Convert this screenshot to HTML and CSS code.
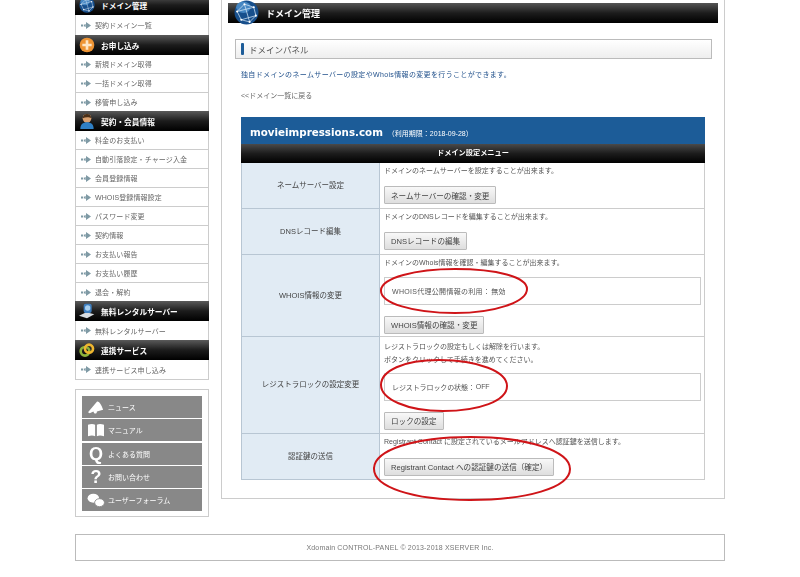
FILE: index.html
```html
<!DOCTYPE html>
<html lang="ja">
<head>
<meta charset="utf-8">
<title>Xdomain ドメイン管理</title>
<link rel="stylesheet" href="styles.css">
</head>
<body>
<svg class="defs" width="0" height="0">
  <symbol id="arrow" viewBox="0 0 10 7"><path d="M0 2.500h2v2H0zM2.800 2.500h1.400v2H2.800zM5 0l5 3.500-5 3.500v-2H4.500v-3H5z" fill="#7f9aa5"/></symbol>
  <symbol id="globe" viewBox="0 0 24 24"><circle cx="12" cy="12" r="11.500" fill="#174f8c"/><ellipse cx="9" cy="7" rx="7" ry="5.500" fill="#5ea4df" opacity=".65"/><path d="M3 11l7-7 9 3 2 8-6 6-8-2zM10 4l5 17M3 11l16-4M7 19l14-4" fill="none" stroke="#d6e8f7" stroke-width=".7"/><g fill="#fff"><circle cx="10" cy="4" r="1"/><circle cx="19" cy="7" r="1"/><circle cx="3" cy="11" r="1"/><circle cx="21" cy="15" r="1"/><circle cx="15" cy="21" r="1"/><circle cx="7" cy="19" r="1"/></g></symbol>
</svg>
<div class="page">
  <div class="columns">
    <aside class="sidebar">
      <nav class="menu">
        <h3 class="menu-head"><svg class="head-icon"><use href="#globe"/></svg>ドメイン管理</h3>
        <a class="menu-row menu-row-tall"><svg class="bullet"><use href="#arrow"/></svg>契約ドメイン一覧</a>
        <h3 class="menu-head"><svg class="head-icon" viewBox="0 0 24 24"><circle cx="12" cy="12" r="11" fill="#ee9434"/><path d="M10 5h4v5h5v4h-5v5h-4v-5H5v-4h5z" fill="#fde6c8"/></svg>お申し込み</h3>
        <a class="menu-row"><svg class="bullet"><use href="#arrow"/></svg>新規ドメイン取得</a>
        <a class="menu-row"><svg class="bullet"><use href="#arrow"/></svg>一括ドメイン取得</a>
        <a class="menu-row menu-row-short"><svg class="bullet"><use href="#arrow"/></svg>移管申し込み</a>
        <h3 class="menu-head"><svg class="head-icon" viewBox="0 0 24 24"><circle cx="12" cy="8" r="6.500" fill="#d9a06f"/><path d="M5.500 8a6.500 6.500 0 0 1 13 0c-3-2-9-2-13 0z" fill="#4a2f18"/><path d="M2 24c0-7 4-10 10-10s10 3 10 10z" fill="#2f7fc4"/></svg>契約・会員情報</h3>
        <a class="menu-row"><svg class="bullet"><use href="#arrow"/></svg>料金のお支払い</a>
        <a class="menu-row"><svg class="bullet"><use href="#arrow"/></svg>自動引落設定・チャージ入金</a>
        <a class="menu-row"><svg class="bullet"><use href="#arrow"/></svg>会員登録情報</a>
        <a class="menu-row"><svg class="bullet"><use href="#arrow"/></svg>WHOIS登録情報設定</a>
        <a class="menu-row"><svg class="bullet"><use href="#arrow"/></svg>パスワード変更</a>
        <a class="menu-row"><svg class="bullet"><use href="#arrow"/></svg>契約情報</a>
        <a class="menu-row"><svg class="bullet"><use href="#arrow"/></svg>お支払い報告</a>
        <a class="menu-row"><svg class="bullet"><use href="#arrow"/></svg>お支払い履歴</a>
        <a class="menu-row menu-row-short"><svg class="bullet"><use href="#arrow"/></svg>退会・解約</a>
        <h3 class="menu-head"><svg class="head-icon" viewBox="0 0 24 24"><path d="M0 19l11-5 12 3-11 6z" fill="#d8dde2"/><rect x="7" y="1" width="12" height="14" rx="3" fill="#3f7fc0"/><circle cx="13" cy="7.500" r="4" fill="#a9d0ef"/></svg>無料レンタルサーバー</h3>
        <a class="menu-row"><svg class="bullet"><use href="#arrow"/></svg>無料レンタルサーバー</a>
        <h3 class="menu-head"><svg class="head-icon" viewBox="0 0 24 24"><circle cx="9" cy="14" r="6.500" fill="none" stroke="#8db33a" stroke-width="4"/><circle cx="15" cy="10" r="6" fill="none" stroke="#efb62f" stroke-width="4"/></svg>連携サービス</h3>
        <a class="menu-row"><svg class="bullet"><use href="#arrow"/></svg>連携サービス申し込み</a>
      </nav>
      <div class="links">
        <a class="link"><svg class="link-icon" viewBox="0 0 20 18"><path d="M1 15L11 3c2-1 5 3 7 9l-7 2c0 2-1 3-3 2l-1-2-4 2z" fill="#fff"/></svg>ニュース</a>
        <a class="link"><svg class="link-icon" viewBox="0 0 20 18"><path d="M1 3c3-1 6-1 8 0v13c-2-1-5-1-8 0zM11 3c2-1 5-1 8 0v13c-3-1-6-1-8 0z" fill="#fff"/></svg>マニュアル</a>
        <a class="link"><span class="link-glyph">Q</span>よくある質問</a>
        <a class="link"><span class="link-glyph">?</span>お問い合わせ</a>
        <a class="link"><svg class="link-icon" viewBox="0 0 20 18"><ellipse cx="7" cy="7" rx="6.500" ry="5" fill="#fff"/><ellipse cx="14" cy="12" rx="5.500" ry="4.500" fill="#fff" stroke="#888"/></svg>ユーザーフォーラム</a>
      </div>
    </aside>
    <main class="card">
      <h1 class="title"><svg class="title-icon"><use href="#globe"/></svg>ドメイン管理</h1>
      <h2 class="panel-head"><span class="accent"></span>ドメインパネル</h2>
      <p class="lead">独自ドメインのネームサーバーの設定やWhois情報の変更を行うことができます。</p>
      <p class="back">&lt;&lt;ドメイン一覧に戻る</p>
      <div class="domain">
        <div class="domain-name">movieimpressions.com<span class="expiry">（利用期限：2018-09-28）</span></div>
        <div class="domain-menu">ドメイン設定メニュー</div>
        <table class="settings">
          <tr class="r1">
            <th>ネームサーバー設定</th>
            <td><p class="desc">ドメインのネームサーバーを設定することが出来ます。</p><button class="btn">ネームサーバーの確認・変更</button></td>
          </tr>
          <tr class="r2">
            <th>DNSレコード編集</th>
            <td><p class="desc">ドメインのDNSレコードを編集することが出来ます。</p><button class="btn">DNSレコードの編集</button></td>
          </tr>
          <tr class="r3">
            <th>WHOIS情報の変更</th>
            <td><p class="desc">ドメインのWhois情報を確認・編集することが出来ます。</p>
              <div class="status"><span>WHOIS代理公開情報の利用：</span><span>無効</span></div>
              <button class="btn btn-low">WHOIS情報の確認・変更</button></td>
          </tr>
          <tr class="r4">
            <th>レジストラロックの設定変更</th>
            <td><p class="desc desc-tight">レジストラロックの設定もしくは解除を行います。</p><p class="desc desc-tight">ボタンをクリックして手続きを進めてください。</p>
              <div class="status"><span>レジストラロックの状態：</span><span>OFF</span></div>
              <button class="btn btn-low">ロックの設定</button></td>
          </tr>
          <tr class="r5">
            <th>認証鍵の送信</th>
            <td><p class="desc">Registrant Contact に設定されているメールアドレスへ認証鍵を送信します。</p><button class="btn btn-wide">Registrant Contact への認証鍵の送信（確定）</button></td>
          </tr>
        </table>
      </div>
    </main>
  </div>
  <footer class="footer">Xdomain CONTROL-PANEL © 2013-2018 XSERVER Inc.</footer>
</div>
<svg class="marks" viewBox="0 0 800 577">
  <path d="M381 290c1-12 34-21 74-21 42 0 72 8 72 20 0 13-32 24-72 24-42 0-75-10-74-23z"/>
  <path d="M381 385c0-14 22-25 58-25 40 0 68 12 68 26 0 15-28 25-64 25-36 0-62-12-62-26z"/>
  <path d="M374 468c1-18 40-31 96-31 58 0 100 14 100 32 0 19-44 31-100 31-58 0-97-13-96-32z"/>
</svg>
</body>
</html>
```

FILE: styles.css
```css
* { box-sizing: border-box; }
html, body { margin: 0; padding: 0; background: #fff; }
body {
  font-family: "Liberation Sans", "Noto Sans CJK JP", sans-serif;
  font-size: 7px;
  color: #555;
  position: relative;
  height: 577px;
  overflow: hidden;
}
.defs { position: absolute; }
.page { width: 650px; margin: -5px 0 0 75px; filter: blur(.4px); }
.columns { display: flex; gap: 12px; align-items: flex-start; }

.sidebar { width: 134px; flex: none; display: flex; flex-direction: column; gap: 9px; }
.menu { display: flex; flex-direction: column; border: 1px solid #ccc; border-width: 0 1px 1px; }
.menu-head {
  margin: 0 -1px;
  height: 20px;
  display: flex;
  align-items: center;
  gap: 6px;
  padding-left: 4px;
  background: linear-gradient(#5a5a5a, #1c1c1c 50%, #000);
  color: #fff;
  font-size: 7.7px;
  font-weight: 700;
}
.head-icon { width: 16px; height: 16px; flex: none; }
.menu-row {
  height: 19px;
  display: flex;
  align-items: center;
  gap: 4px;
  padding-left: 5px;
  border-bottom: 1px solid #ccc;
  background: #fff;
  color: #666;
  letter-spacing: .1px;
}
.menu-row:last-child, .menu-row:has(+ .menu-head) { border-bottom: 0; }
.menu-row-tall { height: 20px; }
.menu-row-short { height: 18px; }
.bullet { width: 10px; height: 7px; flex: none; }

.links {
  border: 1px solid #ccc;
  padding: 6px 6px 5px;
  display: flex;
  flex-direction: column;
  gap: 1.3px;
}
.link {
  height: 22px;
  background: #888;
  color: #fff;
  display: flex;
  align-items: center;
  gap: 3px;
  padding-left: 5px;
  font-size: 7px;
}
.link-icon { width: 18px; height: 16px; flex: none; }
.link-glyph {
  width: 18px;
  text-align: center;
  flex: none;
  font: 700 18px/22px "Liberation Sans", sans-serif;
}

.card {
  width: 504px;
  height: 504px;
  flex: none;
  border: 1px solid #ccc;
  padding: 7px 6px 0;
}
.title {
  margin: 0;
  height: 20px;
  display: flex;
  align-items: center;
  padding-left: 38px;
  position: relative;
  background: linear-gradient(#555, #1c1c1c 50%, #000);
  color: #fff;
  font-size: 9px;
  font-weight: 700;
}
.title-icon { position: absolute; left: 6px; top: -3px; width: 25px; height: 25px; }
.panel-head {
  margin: 16px 6px 0 7px;
  height: 20px;
  display: flex;
  align-items: center;
  gap: 5px;
  padding-left: 5px;
  border: 1px solid #bbb;
  background: linear-gradient(#fff, #eee);
  color: #555;
  font-size: 8.5px;
  font-weight: 400;
}
.accent { width: 3px; height: 12px; background: #1e5d99; border-radius: 1px; }
.lead { margin: 10px 0 0 13px; line-height: 12px; color: #1f4f8a; letter-spacing: .35px; }
.back { margin: 9px 0 0 13px; line-height: 12px; color: #666; }

.domain { margin: 15px 13px 0 13px; width: 464px; }
.domain-name {
  height: 27px;
  padding: 5px 0 0 9px;
  background: #1c5c98;
  color: #fff;
  font: 700 10.3px/20px "DejaVu Sans", sans-serif;
}
.expiry { font: 400 7px "Liberation Sans", "Noto Sans CJK JP", sans-serif; margin-left: 5px; }
.domain-menu {
  height: 19px;
  background: linear-gradient(#4a4a4a, #1c1c1c 50%, #000);
  color: #fff;
  font-weight: 700;
  font-size: 7.2px;
  line-height: 18px;
  text-align: center;
}
.settings { width: 464px; border-collapse: collapse; table-layout: fixed; }
.settings th {
  width: 138px;
  background: #e1ebf4;
  border: 1px solid #b8c6d3;
  border-top: 0;
  font-weight: 400;
  font-size: 7.5px;
  color: #444;
  padding: 0 0 2px;
}
.settings td {
  vertical-align: top;
  padding: 0 3px 0 4px;
  border: 1px solid #ccc;
  border-top: 0;
}
.r1 { height: 45px; }
.r2 { height: 46px; }
.r3 { height: 82px; }
.r4 { height: 97px; }
.r5 { height: 46px; }
.desc { margin: -1px 0 0; line-height: 18px; }
.desc-tight { line-height: 13px; padding-top: 4px; }
.desc-tight + .desc-tight { padding-top: 0; margin-top: 0; }
.btn {
  display: block;
  height: 18px;
  margin-top: 6px;
  padding: 0 6px;
  border: 1px solid #bbb;
  border-radius: 1px;
  background: linear-gradient(#f8f8f8, #dedede);
  color: #444;
  font: 7.6px "Liberation Sans", "Noto Sans CJK JP", sans-serif;
  white-space: nowrap;
}
.btn-low { margin-top: 11px; }
.btn-wide { margin-top: 7px; }
.status {
  margin-top: 5px;
  height: 28px;
  width: 317px;
  display: flex;
  align-items: center;
  padding-left: 7px;
  border: 1px solid #ccc;
  gap: 1px;
}
.r3 .status { letter-spacing: .3px; }
.r4 .status { margin-top: 7px; letter-spacing: -.1px; }

.footer {
  margin-top: 17px;
  height: 27px;
  border: 1px solid #bbb;
  text-align: center;
  line-height: 25px;
  color: #777;
  letter-spacing: .17px;
}
.marks {
  position: absolute;
  left: 0;
  top: 0;
  width: 800px;
  height: 577px;
  pointer-events: none;
  fill: none;
  stroke: #cf1418;
  stroke-width: 2;
}
```
